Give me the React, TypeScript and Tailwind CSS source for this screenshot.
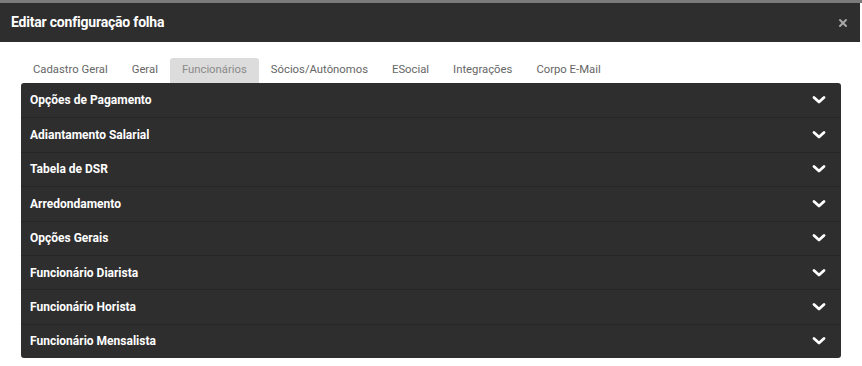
import { X } from 'lucide-react';

const tabs = ['Cadastro Geral', 'Geral', 'Funcionários', 'Sócios/Autônomos', 'ESocial', 'Integrações', 'Corpo E-Mail'];

const sections = [
  'Opções de Pagamento',
  'Adiantamento Salarial',
  'Tabela de DSR',
  'Arredondamento',
  'Opções Gerais',
  'Funcionário Diarista',
  'Funcionário Horista',
  'Funcionário Mensalista',
];

function Chevron() {
  return (
    <svg width="14" height="10" viewBox="0 0 14 10" className="mr-[15px]">
      <polyline points="2,2.5 7,7 12,2.5" fill="none" stroke="#fff" strokeWidth="2.8" strokeLinecap="round" strokeLinejoin="round" />
    </svg>
  );
}

export default function App() {
  return (
    <div className="w-[862px] h-[366px] bg-white overflow-hidden" style={{ fontFamily: 'Roboto, "Liberation Sans", sans-serif' }}>
      <div className="h-[3px] bg-[#7a7a7a]" />
      <div className="h-[39px] bg-[#2e2e2e] flex items-center justify-between pl-[11px] pr-[11px] w-[860px]">
        <h1 className="text-white text-[14px] font-bold tracking-[-0.2px]">Editar configuração folha</h1>
        <X className="w-[12px] h-[12px] text-[#a8a8a8]" strokeWidth={4} />
      </div>

      <div className="pt-[16px] px-[21px]">
        <div className="flex h-[25px]">
          {tabs.map((t) => (
            <div
              key={t}
              className={
                t === 'Funcionários'
                  ? 'px-[12px] flex items-center text-[11.3px] text-[#8a8a8a] bg-[#dcdcdc] rounded-t-[3px]'
                  : 'px-[12px] flex items-center text-[11.3px] text-[#666]'
              }
            >
              {t}
            </div>
          ))}
        </div>

        <div className="w-[820px] bg-[#2e2e2e] rounded-[3px] overflow-hidden">
          {sections.map((s, i) => (
            <div
              key={s}
              className={
                i === 0
                  ? 'h-[34.375px] flex items-center justify-between pl-[9px]'
                  : 'h-[34.375px] flex items-center justify-between pl-[9px] border-t border-[#262626]'
              }
            >
              <span className="text-white text-[12px] font-bold">{s}</span>
              <Chevron />
            </div>
          ))}
        </div>
      </div>
    </div>
  );
}
